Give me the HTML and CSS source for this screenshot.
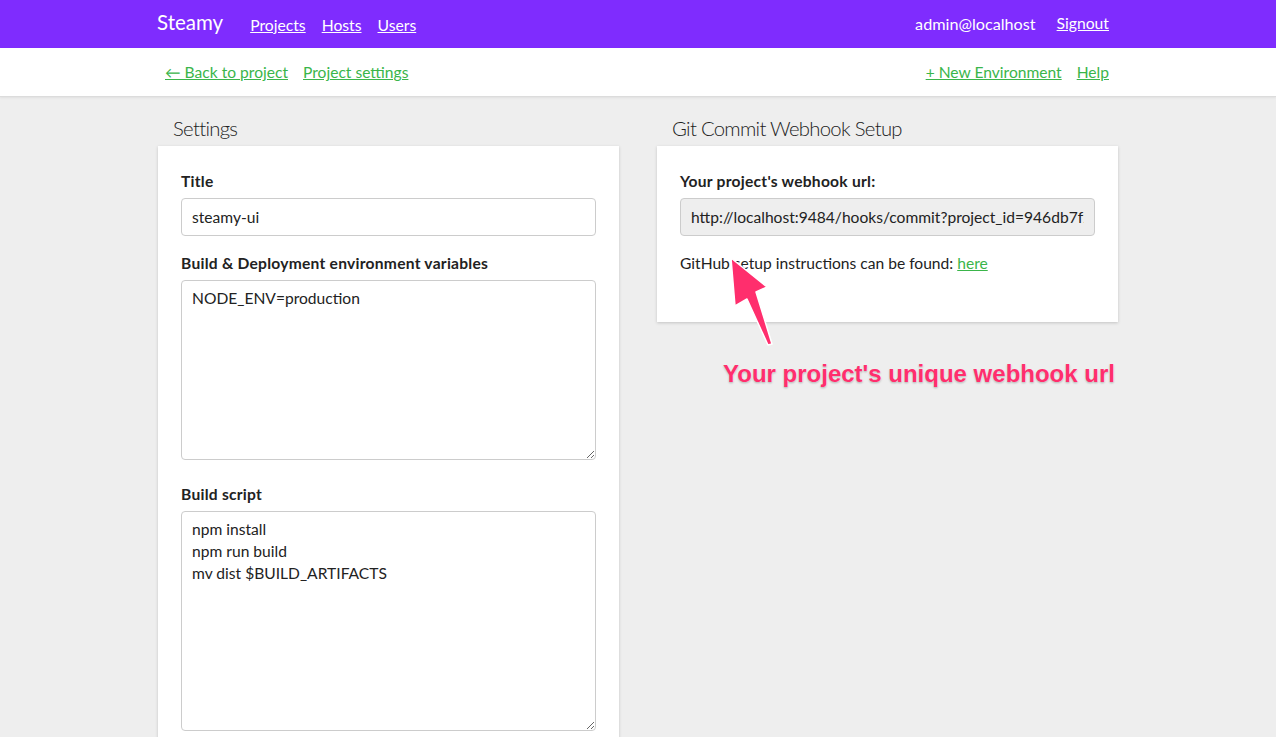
FILE: index.html
```html
<!DOCTYPE html>
<html>
<head>
<meta charset="utf-8">
<title>Steamy</title>
<link rel="stylesheet" href="styles.css">
</head>
<body>
<header class="topbar">
  <div class="container topbar-inner">
    <div class="topbar-left">
      <span class="brand">Steamy</span>
      <nav class="mainnav">
        <a href="#">Projects</a>
        <a href="#">Hosts</a>
        <a href="#">Users</a>
      </nav>
    </div>
    <div class="topbar-right">
      <span class="user">admin@localhost</span>
      <a href="#">Signout</a>
    </div>
  </div>
</header>
<div class="subnav">
  <div class="container subnav-inner">
    <div class="subnav-group">
      <a href="#">&larr; Back to project</a>
      <a href="#">Project settings</a>
    </div>
    <div class="subnav-group">
      <a href="#">+ New Environment</a>
      <a href="#">Help</a>
    </div>
  </div>
</div>
<main class="container columns">
  <section class="col">
    <h2 class="col-title">Settings</h2>
    <div class="card">
      <label class="field-label">Title</label>
      <input class="text-input" type="text" value="steamy-ui">
      <label class="field-label gap-md">Build &amp; Deployment environment variables</label>
      <textarea class="text-area env">NODE_ENV=production</textarea>
      <label class="field-label gap-lg">Build script</label>
      <textarea class="text-area script">npm install
npm run build
mv dist $BUILD_ARTIFACTS</textarea>
    </div>
  </section>
  <section class="col col-right">
    <h2 class="col-title">Git Commit Webhook Setup</h2>
    <div class="card card-short">
      <label class="field-label">Your project's webhook url:</label>
      <input class="text-input readonly" type="text" readonly value="http://localhost:9484/hooks/commit?project_id=946db7f2a1c3">
      <p class="hint">GitHub setup instructions can be found: <a href="#">here</a></p>
    </div>
    <svg class="arrow" width="60" height="100" viewBox="0 0 60 100">
      <path d="M4 2 L40 31 L29 36 L45 88 L41 89 L20 43 L8 50 Z" fill="#ff2e6d" stroke="#ffffff" stroke-width="1.5" stroke-linejoin="round"/>
    </svg>
    <div class="annotation">Your project's unique webhook url</div>
  </section>
</main>
</body>
</html>
```
FILE: styles.css
```css
* { box-sizing: border-box; }
html, body { margin: 0; padding: 0; }
body {
  background: #eeeeee;
  font-family: "Lato", "Open Sans", sans-serif;
  color: #222;
  font-size: 15.6px;
}
.container {
  width: 960px;
  margin: 0 auto;
}
.topbar {
  background: #7f2cfe;
  height: 48px;
  color: #fff;
}
.topbar-inner {
  height: 48px;
  display: flex;
  align-items: center;
  justify-content: space-between;
  padding: 0 9px 2px 0;
}
.topbar-left { display: flex; align-items: center; }
.brand {
  font-size: 20.5px;
  margin-right: 27px;
  margin-left: -1px;
  padding-bottom: 2px;
}
.mainnav { display: flex; gap: 16px; padding-top: 3px; }
.topbar a { color: #fff; text-decoration: underline; font-size: 15.7px; }
.topbar-right { display: flex; align-items: center; gap: 21px; font-size: 16.2px; }
.subnav {
  background: #fff;
  height: 49px;
  border-bottom: 1px solid #dcdcdc;
  box-shadow: 0 1px 2px rgba(0,0,0,0.06);
}
.subnav-inner {
  height: 48px;
  display: flex;
  align-items: center;
  justify-content: space-between;
  padding: 0 9px 0 7px;
}
.subnav-group { display: flex; gap: 15px; }
.subnav a { color: #3ab54a; text-decoration: underline; font-size: 15.6px; }
.columns {
  display: grid;
  grid-template-columns: 461px 461px;
  column-gap: 38px;
  padding-top: 18px;
}
.col { position: relative; }
.col-title {
  font-weight: 300;
  font-size: 20.3px;
  letter-spacing: -0.7px;
  margin: 0 0 5px 15px;
  line-height: 26px;
  color: #222;
}
.card {
  background: #fff;
  box-shadow: 0 1px 3px rgba(0,0,0,0.18);
  padding: 25px 23px 23px;
  display: flex;
  flex-direction: column;
}
.card-short { padding-bottom: 49px; }
.field-label {
  font-weight: 700;
  font-size: 15.6px;
  letter-spacing: 0.25px;
  line-height: 20px;
  margin-bottom: 7px;
  color: #222;
}
.gap-md { margin-top: 17px; }
.gap-lg { margin-top: 24px; }
.text-input, .text-area {
  font-family: "Lato", "Open Sans", sans-serif;
  font-size: 15.6px;
  color: #222;
  border: 1px solid #cccccc;
  border-radius: 4px;
  width: 415px;
  background: #fff;
}
.text-input {
  height: 38px;
  padding: 0 10px;
}
.text-input.readonly { background: #eeeeee; }
.text-area {
  padding: 6px 10px;
  line-height: 22px;
  resize: vertical;
  display: block;
}
.text-area.env { height: 180px; padding-top: 6px; }
.text-area.script { height: 220px; }
.hint {
  margin: 17px 0 0;
  line-height: 20px;
  color: #222;
}
.hint a { color: #3ab54a; text-decoration: underline; }
.arrow {
  position: absolute;
  left: 70px;
  top: 141px;
}
.annotation {
  position: absolute;
  left: 66px;
  top: 245px;
  font-family: "Liberation Sans", Arial, sans-serif;
  font-weight: 700;
  font-size: 24px;
  color: #ff2e6d;
  white-space: nowrap;
  text-shadow: 0 0 2px #fff, 0 1px 2px rgba(0,0,0,0.35);
}
```
